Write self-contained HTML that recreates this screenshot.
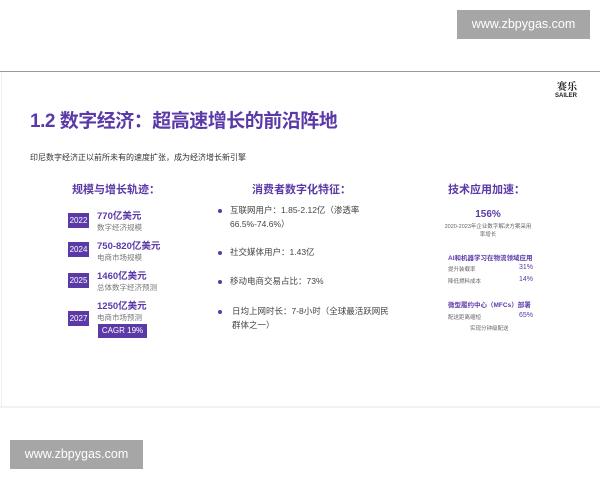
<!DOCTYPE html>
<html><head><meta charset="utf-8"><style>
*{margin:0;padding:0;box-sizing:border-box}
body{width:600px;height:480px;background:#fff;position:relative;overflow:hidden;font-family:"Liberation Sans","Noto Sans CJK SC",sans-serif;color:#333}
.a{position:absolute;white-space:nowrap}
.wm{position:absolute;background:#a6a6a6;color:#fff;font-size:12.5px;text-align:center;line-height:29px}
.p{color:#5b3aa8}
.yr{position:absolute;left:68px;width:21px;height:15px;background:#5b3aa8;color:#fff;font-size:8px;line-height:15px;text-align:center}
.v{font-size:9.5px;font-weight:bold;color:#5b3aa8}
.s{font-size:7.5px;color:#777}
.b{font-size:8.5px;color:#444;line-height:14px}
.dot{position:absolute;width:4px;height:4px;border-radius:50%;background:#5b3aa8}
.t{font-size:5.5px;color:#666}
</style></head><body>
<div class="wm" style="left:457px;top:10px;width:133px;height:29px">www.zbpygas.com</div>
<div class="a" style="left:0;top:71px;width:600px;height:1px;background:#999"></div>
<div class="a" style="left:1px;top:72px;width:1px;height:336px;background:#eee"></div>
<div class="a" style="left:0;top:406px;width:600px;height:2px;background:#f2f2f2"></div>
<div class="a" style="left:557px;top:78px;font-size:10px;font-family:'Noto Serif CJK SC',serif;color:#222;font-weight:bold">赛乐</div>
<div class="a" style="left:555px;top:93px;font-size:6px;color:#222;font-weight:bold">SAILER</div>
<div class="a p" style="left:30px;top:106px;font-size:19px;font-weight:bold;letter-spacing:-0.5px">1.2 数字经济：超高速增长的前沿阵地</div>
<div class="a" style="left:30px;top:152px;font-size:8px;color:#333">印尼数字经济正以前所未有的速度扩张，成为经济增长新引擎</div>
<div class="a p" style="left:72px;top:181px;font-size:11px;font-weight:bold">规模与增长轨迹：</div>
<div class="a p" style="left:252px;top:181px;font-size:11px;font-weight:bold">消费者数字化特征：</div>
<div class="a p" style="left:448px;top:181px;font-size:11px;font-weight:bold">技术应用加速：</div>

<div class="yr" style="top:213px">2022</div>
<div class="a v" style="left:97px;top:208px">770亿美元</div>
<div class="a s" style="left:97px;top:222px">数字经济规模</div>
<div class="yr" style="top:242px">2024</div>
<div class="a v" style="left:97px;top:238px">750-820亿美元</div>
<div class="a s" style="left:97px;top:252px">电商市场规模</div>
<div class="yr" style="top:273px">2025</div>
<div class="a v" style="left:97px;top:268px">1460亿美元</div>
<div class="a s" style="left:97px;top:282px">总体数字经济预测</div>
<div class="yr" style="top:311px">2027</div>
<div class="a v" style="left:97px;top:298px">1250亿美元</div>
<div class="a s" style="left:97px;top:312px">电商市场预测</div>
<div class="a" style="left:98px;top:324px;width:49px;height:14px;background:#5b3aa8;color:#fff;font-size:8px;line-height:14px;text-align:center">CAGR 19%</div>

<div class="dot" style="left:218px;top:209px"></div>
<div class="a b" style="left:230px;top:203px">互联网用户：1.85-2.12亿（渗透率<br>66.5%-74.6%）</div>
<div class="dot" style="left:218px;top:251px"></div>
<div class="a b" style="left:230px;top:245px">社交媒体用户：1.43亿</div>
<div class="dot" style="left:218px;top:280px"></div>
<div class="a b" style="left:230px;top:274px">移动电商交易占比：73%</div>
<div class="dot" style="left:218px;top:310px"></div>
<div class="a b" style="left:232px;top:304px">日均上网时长：7-8小时（全球最活跃网民<br>群体之一）</div>

<div class="a p" style="left:470px;top:209px;font-size:10px;font-weight:bold;width:36px;text-align:center">156%</div>
<div class="a t" style="left:444px;top:223px;width:88px;text-align:center;line-height:8px">2020-2023年企业数字解决方案采用<br>率增长</div>
<div class="a p" style="left:448px;top:252px;font-size:6.5px;font-weight:bold">AI和机器学习在物流领域应用</div>
<div class="a t" style="left:448px;top:265px">提升装载率</div>
<div class="a p" style="left:519px;top:264px;font-size:7px">31%</div>
<div class="a t" style="left:448px;top:277px">降低燃料成本</div>
<div class="a p" style="left:519px;top:276px;font-size:7px">14%</div>
<div class="a p" style="left:448px;top:299px;font-size:6.5px;font-weight:bold">微型履约中心（MFCs）部署</div>
<div class="a t" style="left:448px;top:313px">配送距离缩短</div>
<div class="a p" style="left:519px;top:312px;font-size:7px">65%</div>
<div class="a t" style="left:470px;top:324px">实现分钟级配送</div>

<div class="wm" style="left:10px;top:440px;width:133px;height:29px">www.zbpygas.com</div>
</body></html>
